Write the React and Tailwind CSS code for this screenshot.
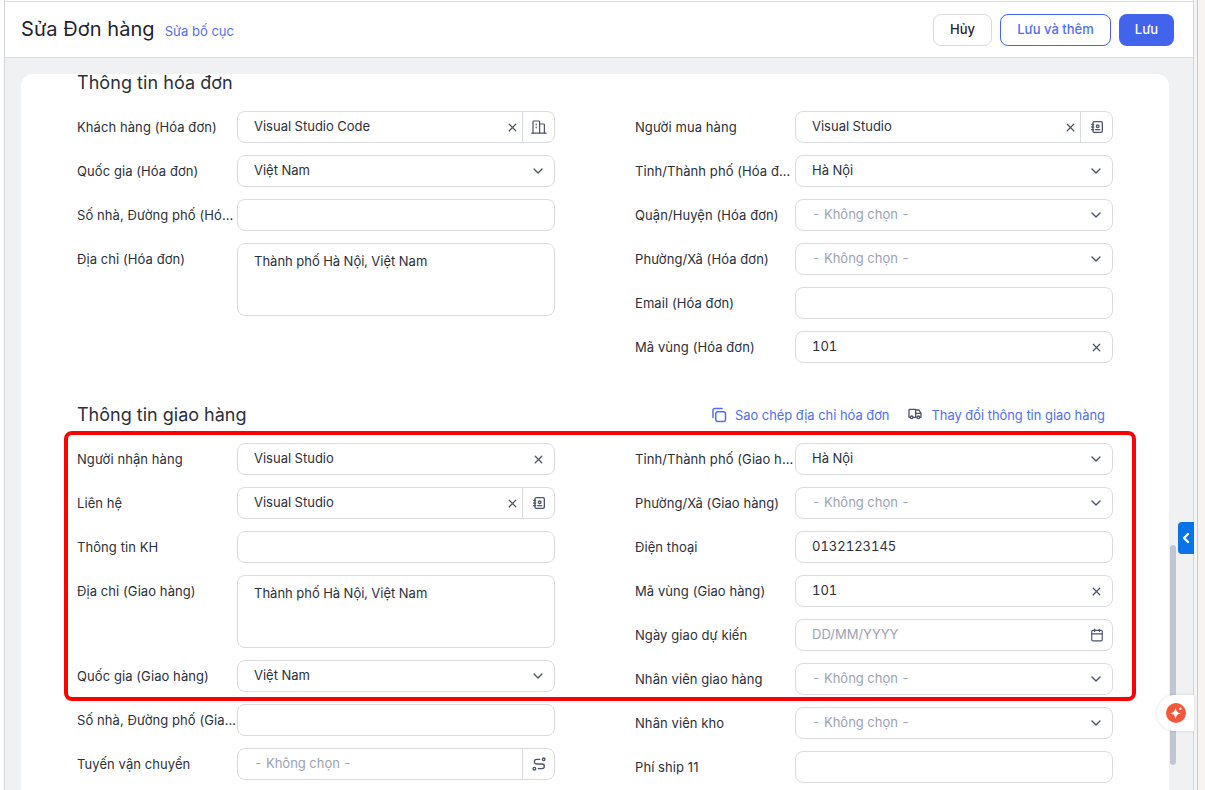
import { X, ChevronDown, ChevronLeft, Calendar } from "lucide-react";
import { TbAddressBook, TbRoute, TbTruck } from "react-icons/tb";

const NONE = "- Không chọn -";

function CompanyIcon({ size = 16 }) {
  return (
    <svg width={size} height={size} viewBox="0 0 16 16" fill="none" stroke="currentColor" strokeWidth="1.2" strokeLinecap="round" strokeLinejoin="round">
      <path d="M.8 14.2h14.4" />
      <path d="M2 14V2.8c0-.5.3-.8.8-.8h5c.5 0 .8.3.8.8V14" />
      <path d="M8.6 5h4c.5 0 .8.3.8.8V14" />
      <path d="M5.2 5v.8M5.2 8v.8" />
    </svg>
  );
}

function CopyIcon({ size = 16 }) {
  return (
    <svg width={size} height={size} viewBox="0 0 16 16" fill="none" stroke="currentColor" strokeWidth="1.5" strokeLinecap="round" strokeLinejoin="round">
      <rect x="4.8" y="4.8" width="9.7" height="9.7" rx="2" />
      <path d="M2 10.5V3.6c0-1.1.9-2 2-2h7" />
    </svg>
  );
}

function Addon({ icon: Icon }) {
  return (
    <div className="flex h-full w-[32px] shrink-0 items-center justify-center border-l border-[#d9dbdf] text-[#4b5468]">
      <Icon size={16} />
    </div>
  );
}

function Field({ label, value, placeholder, clear, select, addon, date, tall }) {
  return (
    <div className="flex items-start">
      <div className="flex h-8 w-[160px] shrink-0 items-center pt-[2px]">
        <span className="truncate text-[13px] tracking-[0.08px] text-[#2b303b]">{label}</span>
      </div>
      <div
        className={`flex min-w-0 flex-1 rounded-lg border border-[#d9dbdf] bg-white ${tall ? "h-[73px] items-start pt-2" : "h-8 items-center"}`}
      >
        <div className={`flex-1 truncate pl-4 text-[13px] tabular-nums ${value ? "text-[#2b303b]" : "text-[#9aa2b3]"}`}>
          {value || placeholder}
        </div>
        {clear && <X size={13} strokeWidth={2.25} className={`text-[#4b5468] ${addon ? "mr-[3px]" : "mr-[9px]"}`} />}
        {select && <ChevronDown size={16} className="mr-2 text-[#4b5468]" />}
        {date && <Calendar size={14} className="mr-[8px] text-[#4b5468]" />}
        {addon && <Addon icon={addon} />}
      </div>
    </div>
  );
}

function Column({ children }) {
  return <div className="flex flex-col gap-3">{children}</div>;
}

export default function App() {
  return (
    <div className="relative flex h-[790px] w-[1205px] overflow-hidden bg-[#f7f4f1] font-['Inter',sans-serif]">
      <div className="w-[4px] shrink-0 bg-white" />
      <div className="flex w-[1190px] shrink-0 flex-col border-x border-[#d4d5d8] bg-[#f0f1f3]">
        <div className="h-[1px] shrink-0 bg-white" />
        {/* Header */}
        <header className="flex h-[57px] shrink-0 items-center justify-between border-y border-[#dcdde0] bg-white pl-4 pr-[19px]">
          <div className="flex items-center gap-[10px]">
            <h1 className="mb-[1px] text-xl leading-7 tracking-[0.05px] text-[#1f2430]">Sửa Đơn hàng</h1>
            <a className="pt-[4px] text-[13px] text-[#4f6ef7]">Sửa bố cục</a>
          </div>
          <div className="flex gap-2">
            <button className="h-8 w-[59px] rounded-lg border border-[#d9dbdf] bg-white pt-[1px] text-[13px] font-medium text-[#1f2430]">Hủy</button>
            <button className="h-8 w-[111px] rounded-lg border border-[#4263eb] bg-white pt-[1px] text-[13px] font-medium text-[#4f6ef7]">Lưu và thêm</button>
            <button className="h-8 w-[55px] rounded-lg bg-[#4263eb] pt-[1px] text-[13px] font-medium text-white">Lưu</button>
          </div>
        </header>

        {/* Form card */}
        <main className="flex-1 overflow-hidden pl-4 pr-6 pt-4">
          <div className="h-[800px] rounded-xl bg-white px-14">
            <h2 className="h-[37px] text-lg leading-[18px] tracking-[0.05px] text-[#2b303b]">Thông tin hóa đơn</h2>
            <div className="grid grid-cols-2 gap-x-20">
              <Column>
                <Field label="Khách hàng (Hóa đơn)" value="Visual Studio Code" clear addon={CompanyIcon} />
                <Field label="Quốc gia (Hóa đơn)" value="Việt Nam" select />
                <Field label="Số nhà, Đường phố (Hóa đơn)" />
                <Field label="Địa chỉ (Hóa đơn)" value="Thành phố Hà Nội, Việt Nam" tall />
              </Column>
              <Column>
                <Field label="Người mua hàng" value="Visual Studio" clear addon={TbAddressBook} />
                <Field label="Tỉnh/Thành phố (Hóa đơn)" value="Hà Nội" select />
                <Field label="Quận/Huyện (Hóa đơn)" placeholder={NONE} select />
                <Field label="Phường/Xã (Hóa đơn)" placeholder={NONE} select />
                <Field label="Email (Hóa đơn)" />
                <Field label="Mã vùng (Hóa đơn)" value="101" clear />
              </Column>
            </div>

            <div className="mt-[38px] mb-[14px] flex h-7 items-center justify-between pr-2">
              <h2 className="text-lg text-[#2b303b]">Thông tin giao hàng</h2>
              <div className="flex items-center gap-[18px] pt-[1px] text-[12.9px] text-[#4f6ef7]">
                <span className="flex items-center gap-2"><CopyIcon size={16} />Sao chép địa chỉ hóa đơn</span>
                <span className="flex items-center gap-2"><TbTruck size={16} className="mb-[2px] text-[#4b5468]" />Thay đổi thông tin giao hàng</span>
              </div>
            </div>

            <div className="grid grid-cols-2 gap-x-20">
              <Column>
                <Field label="Người nhận hàng" value="Visual Studio" clear />
                <Field label="Liên hệ" value="Visual Studio" clear addon={TbAddressBook} />
                <Field label="Thông tin KH" />
                <Field label="Địa chỉ (Giao hàng)" value="Thành phố Hà Nội, Việt Nam" tall />
                <Field label="Quốc gia (Giao hàng)" value="Việt Nam" select />
                <Field label="Số nhà, Đường phố (Giao hàng)" />
                <Field label="Tuyến vận chuyển" placeholder={NONE} addon={TbRoute} />
              </Column>
              <Column>
                <Field label="Tỉnh/Thành phố (Giao hàng)" value="Hà Nội" select />
                <Field label="Phường/Xã (Giao hàng)" placeholder={NONE} select />
                <Field label="Điện thoại" value="0132123145" />
                <Field label="Mã vùng (Giao hàng)" value="101" clear />
                <Field label="Ngày giao dự kiến" placeholder="DD/MM/YYYY" date />
                <Field label="Nhân viên giao hàng" placeholder={NONE} select />
                <Field label="Nhân viên kho" placeholder={NONE} select />
                <Field label="Phí ship 11" />
              </Column>
            </div>
          </div>
        </main>
      </div>
      <div className="w-[4px] shrink-0 border-r border-[#c9cacd] bg-[#f5f5f5]" />

      {/* Annotation drawn over the form */}
      <div className="absolute left-[64px] top-[431px] h-[270px] w-[1072px] rounded-lg border-4 border-[#ff0000]" />

      {/* Scrollbar */}
      <div className="absolute left-[1170px] top-[545px] h-[220px] w-[6px] rounded-full bg-[#c1c6d4]" />

      {/* Side tab */}
      <div className="absolute left-[1178px] top-[522px] flex h-8 w-4 items-center justify-center rounded-l bg-[#0b73e8] text-white">
        <ChevronLeft size={16} strokeWidth={3.5} />
      </div>

      {/* Assistant button */}
      <div className="absolute left-[1157px] top-[695px] flex h-9 w-[37px] items-center rounded-l-full bg-white pl-[9px] shadow-[0_0_3px_rgba(0,0,0,0.15)]">
        <div className="flex h-5 w-5 items-center justify-center rounded-full bg-[#f4583a] text-white">
          <svg width="20" height="20" viewBox="0 0 20 20" fill="currentColor">
            <path d="M9.5 4.5c.5 3.6 2 5.2 5.5 5.8-3.5.6-5 2.2-5.5 5.7-.5-3.5-2-5.1-5.5-5.7 3.5-.6 5-2.2 5.5-5.8z" />
            <circle cx="14.3" cy="5.8" r="1.2" />
          </svg>
        </div>
      </div>
    </div>
  );
}
